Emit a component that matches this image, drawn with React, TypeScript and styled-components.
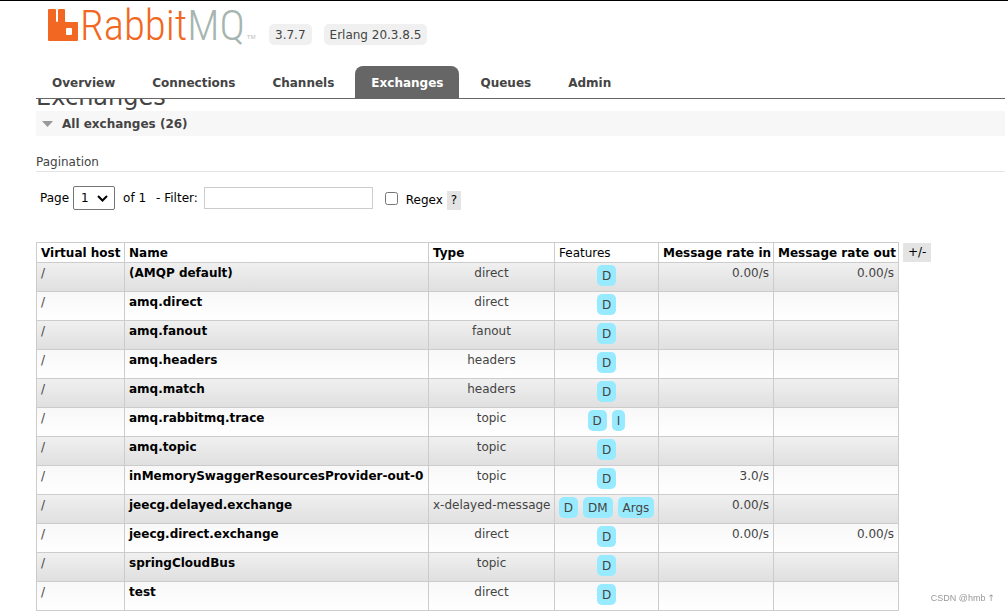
import React from "react";
import styled, { createGlobalStyle } from "styled-components";

const GlobalStyle = createGlobalStyle`
  * { box-sizing: border-box; }
  html { overflow: hidden; }
  body {
    margin: 0;
    background: #fff;
    color: #444;
    font: 12px/16px Verdana, "DejaVu Sans", sans-serif;
  }
  button, input, select { font: inherit; color: #000; margin: 0; }
`;

const Page = styled.div`
  border-top: 1px solid #000;
  padding: 0 3px 0 36px;
`;

const Header = styled.header`
  border-bottom: 1px solid #666;
`;

const Brand = styled.div`
  display: flex;
  align-items: flex-start;
  height: 65px;
  padding-left: 12px;
`;

const LogoLink = styled.a`
  display: flex;
  align-items: flex-start;
  width: 203px;
  color: #f26822;
  text-decoration: none;
`;

const LogoMark = styled.svg`
  display: block;
  flex: none;
  width: 30px;
  height: 33px;
  margin-top: 7px;
`;

const Wordmark = styled.span`
  margin-left: 2px;
  font: 300 43px/48px "Roboto Condensed", "Open Sans Condensed", "Lato", sans-serif;
`;

const WordmarkTail = styled.span`
  color: #a6b5af;
`;

const Trademark = styled.span`
  margin: 30px 0 0 2px;
  color: #bbb;
  font: 6px/12px "Liberation Sans", sans-serif;
`;

const Versions = styled.div`
  display: flex;
  gap: 12px;
  margin: 23px 0 0 18px;
`;

const Version = styled.span`
  padding: 3px 6px 2px;
  border-radius: 5px;
  background: #f0f0f0;
`;

const Tabs = styled.nav`
  display: flex;
  gap: 5px;
`;

const Tab = styled.a<{ $active?: boolean }>`
  padding: 9px 16px 7px;
  border-radius: 8px 8px 0 0;
  background: ${(p) => (p.$active ? "#666" : "transparent")};
  color: ${(p) => (p.$active ? "#fff" : "#444")};
  font-weight: bold;
  text-decoration: none;
`;

const Main = styled.main`
  overflow: hidden;
`;

const Title = styled.h1`
  margin: -16px 0 0;
  font-size: 24px;
  line-height: 28px;
  font-weight: normal;
`;

const SectionToggle = styled.button`
  display: flex;
  align-items: center;
  gap: 9px;
  width: 100%;
  height: 25px;
  padding: 0 6px;
  border: 0;
  background: #f7f7f7;
  color: #444;
  font-weight: bold;
`;

const Caret = styled.svg`
  width: 11px;
  height: 6px;
`;

const Subheading = styled.h3`
  margin: 18px 0 14px;
  padding-bottom: 1px;
  border-bottom: 1px solid #e4e4e4;
  font-size: 12px;
  line-height: 16px;
  font-weight: normal;
`;

const Filters = styled.form`
  display: flex;
  align-items: center;
  height: 24px;
  margin-bottom: 32px;
  padding-left: 4px;
  color: #000;
`;

const SelectWrap = styled.span`
  display: grid;
  align-items: center;
  width: 42px;
  height: 24px;
  margin: 0 8px 0 4px;
`;

const PageSelect = styled.select`
  grid-area: 1 / 1;
  appearance: none;
  width: 100%;
  height: 100%;
  padding: 0 7px;
  border: 1px solid #767676;
  border-radius: 2px;
  background: #fff;
`;

const Chevron = styled.svg`
  grid-area: 1 / 1;
  justify-self: end;
  width: 11px;
  height: 7px;
  margin-right: 7px;
  pointer-events: none;
`;

const FilterInput = styled.input`
  width: 169px;
  height: 22px;
  margin: 0 12px 0 6px;
  border: 1px solid #ccc;
`;

const FilterLabel = styled.label`
  margin-left: 10px;
`;

const RegexBox = styled.input`
  width: 13px;
  height: 13px;
  margin-right: 8px;
`;

const RegexLabel = styled.label`
  padding-top: 4px;
`;

const SmallButton = styled.button`
  flex: none;
  height: 19px;
  padding: 0 4px;
  border: 0;
  background: #e4e4e4;
  line-height: 19px;
`;

const RegexHelp = styled(SmallButton)`
  margin: 4px 0 0 4px;
`;

const TableArea = styled.div`
  display: flex;
  align-items: flex-start;
  gap: 4px;
`;

const ColumnsButton = styled(SmallButton)`
  margin-top: 1px;
  padding: 0 5px;
`;

const Table = styled.table`
  border-collapse: collapse;
  table-layout: fixed;
  width: 863px;
`;

const Col = styled.col<{ $w: number }>`
  width: ${(p) => p.$w}px;
`;

const HeadCell = styled.th<{ $plain?: boolean }>`
  height: 20px;
  padding: 2px 4px 1px;
  border: 1px solid #ccc;
  color: #000;
  font-weight: ${(p) => (p.$plain ? "normal" : "bold")};
  text-align: left;
  white-space: nowrap;
`;

const Row = styled.tr<{ $alt: boolean }>`
  background: ${(p) =>
    p.$alt ? "linear-gradient(#f8f8f8, #fff)" : "linear-gradient(#f0f0f0, #dfdfdf)"};
`;

const Cell = styled.td<{ $align?: "left" | "center" | "right" }>`
  height: 29px;
  padding: 2px 4px;
  border: 1px solid #ccc;
  text-align: ${(p) => p.$align ?? "left"};
  vertical-align: top;
  white-space: nowrap;
`;

const ExchangeLink = styled.a`
  color: #000;
  font-weight: bold;
  text-decoration: none;
`;

const Badges = styled.div`
  display: flex;
  justify-content: center;
  gap: 5px;
`;

const Badge = styled.abbr`
  height: 21px;
  padding: 3px 5px 2px;
  border-radius: 5px;
  background: #98ebff;
`;

const Watermark = styled.span`
  position: fixed;
  right: 13px;
  bottom: 7px;
  color: #999;
  font: 9px/12px "Liberation Sans", "DejaVu Sans", sans-serif;
`;

const WatermarkArrow = styled.span`
  margin-left: 2px;
  font-family: "DejaVu Sans", sans-serif;
`;

const tabs = ["Overview", "Connections", "Channels", "Exchanges", "Queues", "Admin"];

const widths = [88, 304, 126, 104, 115, 125];

interface Exchange {
  name: string;
  type: string;
  features: string[];
  rateIn?: string;
  rateOut?: string;
}

const exchanges: Exchange[] = [
  { name: "(AMQP default)", type: "direct", features: ["D"], rateIn: "0.00/s", rateOut: "0.00/s" },
  { name: "amq.direct", type: "direct", features: ["D"] },
  { name: "amq.fanout", type: "fanout", features: ["D"] },
  { name: "amq.headers", type: "headers", features: ["D"] },
  { name: "amq.match", type: "headers", features: ["D"] },
  { name: "amq.rabbitmq.trace", type: "topic", features: ["D", "I"] },
  { name: "amq.topic", type: "topic", features: ["D"] },
  { name: "inMemorySwaggerResourcesProvider-out-0", type: "topic", features: ["D"], rateIn: "3.0/s" },
  { name: "jeecg.delayed.exchange", type: "x-delayed-message", features: ["D", "DM", "Args"], rateIn: "0.00/s" },
  { name: "jeecg.direct.exchange", type: "direct", features: ["D"], rateIn: "0.00/s", rateOut: "0.00/s" },
  { name: "springCloudBus", type: "topic", features: ["D"] },
  { name: "test", type: "direct", features: ["D"] },
];

export default function App() {
  return (
    <>
      <GlobalStyle />
      <Page>
        <Header>
          <Brand>
            <LogoLink href="#/">
              <LogoMark viewBox="0 0 30 33" aria-hidden="true">
                <path
                  fill="#f26822"
                  fillRule="evenodd"
                  d="M1 1h6q1 0 1 1v11q0 1 1 1h0q1 0 1-1V2q0-1 1-1h5q1 0 1 1v11q0 1 1 1h11q1 0 1 1v17q0 1-1 1H1q-1 0-1-1V2q0-1 1-1zM19 20q-1 0-1 1v5q0 1 1 1h4q1 0 1-1v-5q0-1-1-1z"
                />
              </LogoMark>
              <Wordmark>
                Rabbit<WordmarkTail>MQ</WordmarkTail>
              </Wordmark>
              <Trademark>TM</Trademark>
            </LogoLink>
            <Versions>
              <Version>3.7.7</Version>
              <Version>Erlang 20.3.8.5</Version>
            </Versions>
          </Brand>
          <Tabs>
            {tabs.map((t) => (
              <Tab key={t} href={`#/${t.toLowerCase()}`} $active={t === "Exchanges"}>
                {t}
              </Tab>
            ))}
          </Tabs>
        </Header>
        <Main>
          <Title>Exchanges</Title>
          <SectionToggle type="button">
            <Caret viewBox="0 0 11 6" aria-hidden="true">
              <path d="M0 0h11L5.500 6z" fill="#999" />
            </Caret>
            All exchanges (26)
          </SectionToggle>
          <Subheading>Pagination</Subheading>
          <Filters>
            <label htmlFor="page">Page</label>
            <SelectWrap>
              <PageSelect id="page" defaultValue="1">
                <option>1</option>
              </PageSelect>
              <Chevron viewBox="0 0 11 7" aria-hidden="true">
                <path d="M1 1l4.500 4.500L10 1" fill="none" stroke="#000" strokeWidth="2" />
              </Chevron>
            </SelectWrap>
            <span>of 1</span>
            <FilterLabel htmlFor="filter">- Filter:</FilterLabel>
            <FilterInput id="filter" type="text" />
            <RegexBox id="regex" type="checkbox" />
            <RegexLabel htmlFor="regex">Regex</RegexLabel>
            <RegexHelp type="button">?</RegexHelp>
          </Filters>
          <TableArea>
            <Table>
              <colgroup>
                {widths.map((w, i) => (
                  <Col key={i} $w={w} />
                ))}
              </colgroup>
              <thead>
                <tr>
                  <HeadCell>Virtual host</HeadCell>
                  <HeadCell>Name</HeadCell>
                  <HeadCell>Type</HeadCell>
                  <HeadCell $plain>Features</HeadCell>
                  <HeadCell>Message rate in</HeadCell>
                  <HeadCell>Message rate out</HeadCell>
                </tr>
              </thead>
              <tbody>
                {exchanges.map((x, i) => (
                  <Row key={x.name} $alt={i % 2 === 1}>
                    <Cell>/</Cell>
                    <Cell>
                      <ExchangeLink href={`#/exchanges/${x.name}`}>{x.name}</ExchangeLink>
                    </Cell>
                    <Cell $align="center">{x.type}</Cell>
                    <Cell>
                      <Badges>
                        {x.features.map((f) => (
                          <Badge key={f}>{f}</Badge>
                        ))}
                      </Badges>
                    </Cell>
                    <Cell $align="right">{x.rateIn}</Cell>
                    <Cell $align="right">{x.rateOut}</Cell>
                  </Row>
                ))}
              </tbody>
            </Table>
            <ColumnsButton type="button">+/-</ColumnsButton>
          </TableArea>
        </Main>
      </Page>
      <Watermark>
        CSDN @hmb<WatermarkArrow>↑</WatermarkArrow>
      </Watermark>
    </>
  );
}
